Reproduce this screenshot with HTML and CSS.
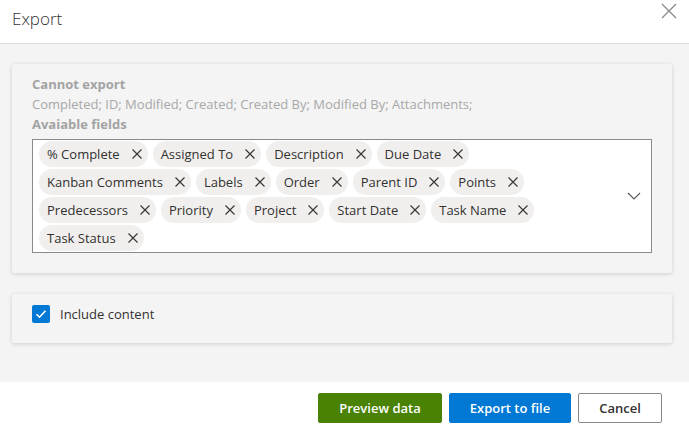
FILE: index.html
```html
<!DOCTYPE html>
<html lang="en">
<head>
    <meta charset="UTF-8">
    <title>Export</title>
    <link rel="stylesheet" href="styles.css">
</head>
<body>
    <div class="dialog">
        <div class="dialog-header">
            <div class="dialog-title">Export</div>
            <button class="close-btn" aria-label="Close">
                <svg width="16" height="16" viewBox="0 0 16 16"><path d="M1 1 L15 15 M15 1 L1 15" stroke="#8a8a8a" stroke-width="1.3" fill="none"/></svg>
            </button>
        </div>
        <div class="dialog-body">
            <div class="card fields-card">
                <div class="label">Cannot export</div>
                <div class="muted">Completed; ID; Modified; Created; Created By; Modified By; Attachments;</div>
                <div class="label">Avaiable fields</div>
                <div class="picker">
                    <div class="tags" id="tags"></div>
                    <svg class="chevron" width="14" height="8" viewBox="0 0 14 8"><path d="M1 1 L7 7 L13 1" stroke="#555" stroke-width="1.1" fill="none"/></svg>
                </div>
            </div>
            <div class="card option-card">
                <label class="check">
                    <span class="box">
                        <svg width="12" height="10" viewBox="0 0 12 10"><path d="M1.5 5.2 L4.5 8.2 L10.5 1.8" stroke="#fff" stroke-width="1.6" fill="none"/></svg>
                    </span>
                    Include content
                </label>
            </div>
        </div>
        <div class="dialog-footer">
            <button class="btn btn-green">Preview data</button>
            <button class="btn btn-blue">Export to file</button>
            <button class="btn btn-plain">Cancel</button>
        </div>
    </div>

    <script>
        const fields = ['% Complete', 'Assigned To', 'Description', 'Due Date', 'Kanban Comments',
            'Labels', 'Order', 'Parent ID', 'Points', 'Predecessors', 'Priority', 'Project',
            'Start Date', 'Task Name', 'Task Status'];

        const tags = document.getElementById('tags');
        fields.forEach(name => {
            const tag = document.createElement('span');
            tag.className = 'tag';
            tag.innerHTML = '<span>' + name + '</span>' +
                '<svg width="10" height="10" viewBox="0 0 10 10"><path d="M0.5 0.5 L9.5 9.5 M9.5 0.5 L0.5 9.5" stroke="#333" stroke-width="1.1" fill="none"/></svg>';
            tags.appendChild(tag);
        });
    </script>
</body>
</html>
```

FILE: styles.css
```css
body {
    margin: 0;
    font-family: "Open Sans", "Noto Sans", sans-serif;
    font-size: 13px;
    color: #323130;
    background: #fff;
}
.dialog {
    display: flex;
    flex-direction: column;
    height: 441px;
}
.dialog-header {
    height: 43px;
    border-bottom: 1px solid #dedede;
    display: flex;
    align-items: flex-start;
    justify-content: space-between;
}
.dialog-title {
    font-size: 17px;
    font-weight: 300;
    color: #333;
    padding: 7px 0 0 12px;
}
.close-btn {
    border: none;
    background: none;
    padding: 0;
    margin: 3px 12px 0 0;
    width: 16px;
    height: 16px;
}
.dialog-body {
    background: #f4f4f4;
    padding: 20px 17px 40px 12px;
    height: 278px;
    display: flex;
    flex-direction: column;
    gap: 21px;
}
.card {
    background: #f4f4f4;
    border-radius: 2px;
    box-shadow: 0 1px 4px rgba(0, 0, 0, 0.16);
}
.fields-card {
    padding: 10px 20px 20px 20px;
}
.label {
    font-weight: 700;
    color: #a3a3a3;
    line-height: 20px;
}
.muted {
    color: #a8a8a8;
    line-height: 20px;
}
.picker {
    margin-top: 5px;
    background: #fff;
    border: 1px solid #8a8a8a;
    display: flex;
    align-items: center;
    min-height: 112px;
}
.tags {
    flex: 1;
    display: flex;
    flex-wrap: wrap;
    align-content: flex-start;
    align-self: stretch;
    gap: 2px 5px;
    padding: 1px 0 0 6px;
}
.tag {
    display: inline-flex;
    align-items: center;
    height: 26px;
    padding: 0 6px 0 8px;
    gap: 12px;
    background: #f1efee;
    border-radius: 13px;
    color: #323130;
}
.chevron {
    margin: 0 10px 0 20px;
}
.option-card {
    padding: 11px 20px 20px 20px;
}
.check {
    display: flex;
    align-items: center;
    gap: 10px;
    color: #323130;
}
.box {
    width: 18px;
    height: 18px;
    border-radius: 2px;
    background: #0078d4;
    display: flex;
    align-items: center;
    justify-content: center;
}
.dialog-footer {
    flex: 1;
    display: flex;
    justify-content: flex-end;
    align-items: flex-start;
    gap: 7px;
    padding: 11px 27px 0 0;
}
.btn {
    font-family: "Open Sans", "Noto Sans", sans-serif;
    font-size: 13px;
    font-weight: 600;
    height: 30px;
    padding: 0;
    border-radius: 2px;
    white-space: nowrap;
    cursor: pointer;
}
.btn-green {
    background: #498205;
    border: 1px solid #498205;
    color: #fff;
    width: 124px;
}
.btn-blue {
    background: #0078d4;
    border: 1px solid #0078d4;
    color: #fff;
    width: 122px;
}
.btn-plain {
    background: #fff;
    border: 1px solid #8a8886;
    color: #323130;
    width: 84px;
}
```
